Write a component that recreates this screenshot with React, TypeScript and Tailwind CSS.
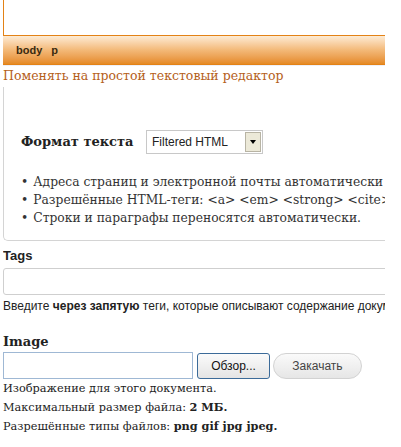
import React from 'react';

const serif = "font-[family-name:DejaVu_Serif,serif]";
const sans = "font-[family-name:Liberation_Sans,Arial,sans-serif]";

export default function App() {
  return (
    <div className="w-[401px] h-[447px] bg-white pl-[3px] overflow-hidden">
      <div className="w-[382px] overflow-hidden">
        {/* editor frame */}
        <div className="h-[35px] border-l border-[#e38216] bg-white" />
        <div className="h-[30px] border-t border-b border-[#e38216] bg-gradient-to-b from-[#fdebd4] via-[#f3b978] to-[#e58a22] flex items-center pl-[13px] gap-[9px] shadow-[0_1px_0_#eef0f8]">
          <span className={`${sans} text-[11px] font-bold text-[#3a2a10]`}>body</span>
          <span className={`${sans} text-[11px] font-bold text-[#3a2a10]`}>p</span>
        </div>
        <div className={`${serif} text-[12.5px] leading-[22px] text-[#b5601a] whitespace-nowrap`}>
          Поменять на простой текстовый редактор
        </div>

        {/* text format fieldset */}
        <div className="border-l border-b border-[#d4d4d4] rounded-bl-[5px] h-[154px] pt-[42px] pl-[17px] whitespace-nowrap">
          <div className="flex items-center h-[26px]">
            <span className={`${serif} w-[125px] text-[13px] font-bold text-[#222]`}>Формат текста</span>
            <div className="flex items-center w-[117px] h-[24px] border border-[#c8c8c8] bg-white">
              <span className={`${sans} flex-1 pl-[5px] text-[12px] text-[#222]`}>Filtered HTML</span>
              <span className="w-[16px] h-[20px] mr-[1px] bg-[#ece9d8] border border-[#b8b4a4] flex items-center justify-center">
                <span className="w-0 h-0 border-l-[3px] border-r-[3px] border-t-[4px] border-l-transparent border-r-transparent border-t-black" />
              </span>
            </div>
          </div>
          <ul className={`${serif} text-[12.3px] leading-[18px] text-[#333] mt-[18px]`}>
            <li className="flex gap-[5px]"><span>•</span>Адреса страниц и электронной почты автоматически преобразовываются в ссылки.</li>
            <li className="flex gap-[5px]"><span>•</span>Разрешённые HTML-теги: &lt;a&gt; &lt;em&gt; &lt;strong&gt; &lt;cite&gt; &lt;code&gt; &lt;ul&gt;</li>
            <li className="flex gap-[5px]"><span>•</span>Строки и параграфы переносятся автоматически.</li>
          </ul>
        </div>

        {/* tags */}
        <div className={`${sans} text-[13px] font-bold text-[#222] mt-[6px] leading-[18px]`}>Tags</div>
        <div className="h-[27px] mt-[3px] border border-[#cfcfcf] rounded-[3px] w-[400px] bg-white" />
        <div className={`${sans} text-[12px] text-[#222] leading-[18px] mt-[2px] whitespace-nowrap`}>
          Введите <b>через запятую</b> теги, которые описывают содержание документа.
        </div>

        {/* image */}
        <div className={`${serif} text-[13px] font-bold text-[#222] mt-[18px] leading-[18px]`}>Image</div>
        <div className="flex items-center gap-[4px] mt-[1px]">
          <div className="w-[190px] h-[27px] border border-[#9fb8d4] bg-white" />
          <button className={`${sans} h-[26px] w-[73px] border border-[#3c6b99] rounded-[3px] bg-gradient-to-b from-[#fbfbfb] to-[#e4e4e4] text-[12px] text-[#111]`}>Обзор...</button>
          <button className={`${sans} h-[26px] w-[89px] -ml-[1px] border border-[#d2d2d2] rounded-full bg-gradient-to-b from-[#fafafa] to-[#e6e6e6] text-[12px] text-[#444]`}>Закачать</button>
        </div>
        <div className={`${serif} text-[11.3px] leading-[18px] text-[#222] mt-[1px] whitespace-nowrap`}>
          <div>Изображение для этого документа.</div>
          <div>Максимальный размер файла: <b>2 MБ.</b></div>
          <div>Разрешённые типы файлов: <b>png gif jpg jpeg.</b></div>
        </div>
      </div>
    </div>
  );
}
